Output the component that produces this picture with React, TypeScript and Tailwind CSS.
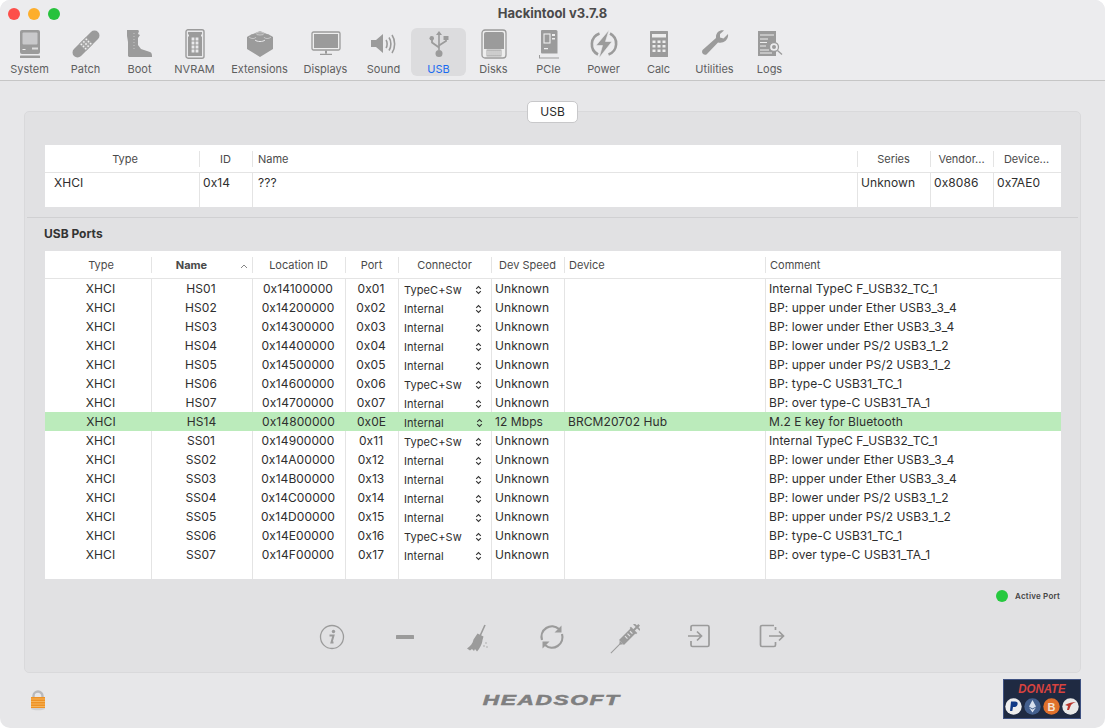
import React from "react";

const G = "#9b9b9b";

const ico: Record<string, React.ReactNode> = {
  System: (
    <svg width="22" height="30" viewBox="0 0 22 30">
      <rect x="1" y="1" width="20" height="24" rx="2" fill={G} />
      <rect x="3.5" y="3.5" width="15" height="12" rx="1" fill="#c9c9cb" />
      <rect x="3.5" y="20" width="3" height="1" fill="#eee" />
      <rect x="13" y="18.5" width="6" height="2" fill="#ddd" />
      <rect x="1" y="26.5" width="20" height="2.5" rx="0.5" fill={G} />
    </svg>
  ),
  Patch: (
    <svg width="30" height="30" viewBox="0 0 30 30">
      <g transform="rotate(-45 15 15)">
        <rect x="-2" y="10" width="34" height="10" rx="5" fill={G} />
        <rect x="10" y="10" width="10" height="10" fill="#a8a8a8" />
        {[11.5, 15, 18.5].map((x) => [12, 15, 18].map((y) => <circle key={`${x}${y}`} cx={x} cy={y} r="0.9" fill="#f0f0f0" />))}
      </g>
    </svg>
  ),
  Boot: (
    <svg width="28" height="30" viewBox="0 0 28 30">
      <path d="M1 1h11l1 1-1 3 2 1-2 3v7l3 4 9 3c2 .7 2 3 2 5H3l-1-1V13L1 7z" fill={G} />
      <path d="M8 4v16" stroke="#c8c8c8" strokeWidth="1" strokeDasharray="1 2" />
    </svg>
  ),
  NVRAM: (
    <svg width="20" height="30" viewBox="0 0 20 30">
      <rect x="1" y="0.8" width="18" height="28.4" rx="2" fill="#e9e9eb" stroke={G} strokeWidth="1.4" />
      <path d="M3 3h14v2l-1 1v1l1 1v19H3V8l1-1V6L3 5z" fill={G} />
      {[8.5, 12.5, 16.5, 20.5].map((y) => (
        <g key={y} fill="#e9e9eb">
          <rect x="6.6" y={y} width="2.8" height="3" />
          <rect x="10.6" y={y} width="2.8" height="3" />
        </g>
      ))}
    </svg>
  ),
  Extensions: (
    <svg width="28" height="28" viewBox="0 0 28 28">
      <path d="M1 7c2-1 4-3 6-3l7-3 7 3c2 0 4 2 6 3v12L14 27 1 19z" fill={G} />
      <ellipse cx="14" cy="3.5" rx="4" ry="1.6" fill="#a8a8a8" stroke="#dcdcde" strokeWidth="0.6" />
      <path d="M3 7c2 2 6 2 7 0M18 7c1 2 5 2 7 0" stroke="#dcdcde" strokeWidth="0.7" fill="none" />
      <path d="M9 10c2 2 8 2 10 0" stroke="#ececee" strokeWidth="1" fill="none" />
    </svg>
  ),
  Displays: (
    <svg width="30" height="26" viewBox="0 0 30 26">
      <rect x="1" y="1" width="28" height="18" rx="1.5" fill="#eee" stroke={G} strokeWidth="1.3" />
      <rect x="3" y="3" width="24" height="14" fill={G} />
      <path d="M14 19.5h2v3h-2zM9 22.800h12v1.300H9z" fill={G} />
    </svg>
  ),
  Sound: (
    <svg width="28" height="26" viewBox="0 0 28 26">
      <path d="M1 9h5l7-6v19l-7-6H1z" fill={G} />
      <path d="M16 9c1.5 2 1.5 6 0 8M19 6.500c2.500 3.500 2.500 9.500 0 13M22 4c3.500 5 3.500 13 0 18" stroke={G} strokeWidth="1.6" fill="none" />
    </svg>
  ),
  USB: (
    <svg width="20" height="28" viewBox="0 0 20 28">
      <path d="M10 1l3 4h-2.200v15H9.200V5H7z" fill={G} />
      <circle cx="10" cy="23.5" r="3.5" fill={G} />
      <path d="M3 8v4.500l7 5M17 8v3l-7 4.500" stroke={G} strokeWidth="1.8" fill="none" />
      <rect x="0.5" y="6" width="4.5" height="4.5" rx="2.2" fill={G} />
      <rect x="14.500" y="6" width="5" height="4" fill={G} />
    </svg>
  ),
  Disks: (
    <svg width="26" height="30" viewBox="0 0 26 30">
      <rect x="1" y="1" width="24" height="28" rx="3" fill="#eee" stroke={G} strokeWidth="1.3" />
      <path d="M3 5a2 2 0 0 1 2-2h16a2 2 0 0 1 2 2v15H3z" fill={G} />
      <rect x="6" y="21" width="14" height="6" fill="none" stroke={G} strokeWidth="0.8" />
      <path d="M8 21v6M10 21v6M12 21v6M14 21v6M16 21v6M18 21v6" stroke={G} strokeWidth="0.8" />
    </svg>
  ),
  PCIe: (
    <svg width="22" height="30" viewBox="0 0 22 30">
      <path d="M4 1h14a1.500 1.500 0 0 1 1.500 1.500v22H4a1 1 0 0 1-1-1V2a1 1 0 0 1 1-1z" fill={G} />
      <rect x="6" y="5" width="6" height="9" fill="none" stroke="#eee" strokeWidth="1.1" />
      <path d="M14 5h3v2h-3zM14 9h3v1.500h-3zM6 19h4v1.200H6z" fill="#eee" />
      <path d="M1 29h20M1.500 26v3" stroke={G} strokeWidth="1" />
    </svg>
  ),
  Power: (
    <svg width="28" height="28" viewBox="0 0 28 28">
      <path d="M9.500 3.500A11.500 11.500 0 0 0 8 24.500M18.500 24.500A11.500 11.500 0 0 0 20 3.500" stroke={G} strokeWidth="2.6" fill="none" />
      <path d="M19 0L6 15.500h6.500L9 28l13-16.500h-6.500z" fill={G} stroke="#ececee" strokeWidth="0.6" />
    </svg>
  ),
  Calc: (
    <svg width="20" height="28" viewBox="0 0 20 28">
      <rect x="1" y="1" width="18" height="26" rx="0.5" fill={G} />
      <rect x="3" y="4" width="14" height="3.500" fill="#eee" />
      {[10.5, 15, 19.5].map((y) => [3.5, 8.5, 13.5].map((x) => <rect key={`${x}${y}`} x={x} y={y} width="3" height="2.5" fill="#eee" />))}
    </svg>
  ),
  Utilities: (
    <svg width="28" height="28" viewBox="0 0 28 28">
      <path d="M27 4l-4.500 4.500-3.500-1V4l4-3.500c-4-1-8.500 2-8 7.500L1.500 20c-1.500 3 1 5.500 4 4.500L17 12.500c5 1.500 11-2.500 10-8.500z" fill={G} />
    </svg>
  ),
  Logs: (
    <svg width="26" height="28" viewBox="0 0 26 28">
      <rect x="1" y="1" width="18" height="25" fill={G} />
      <path d="M3 5h14M3 9h8M3 12.500h7M3 16h6M3 20h9M3 23h12" stroke="#eee" strokeWidth="1.1" />
      <circle cx="17" cy="17" r="4.500" fill="#ececee" stroke={G} strokeWidth="1.3" />
      <circle cx="17" cy="17" r="2" fill={G} />
      <path d="M20.500 20.500l4.500 4" stroke={G} strokeWidth="1.3" />
    </svg>
  ),
};

const tools = [
  { n: "System", w: "w-[55px]" },
  { n: "Patch", w: "w-[57px]" },
  { n: "Boot", w: "w-[51px]" },
  { n: "NVRAM", w: "w-[59px]" },
  { n: "Extensions", w: "w-[71px]" },
  { n: "Displays", w: "w-[61px]" },
  { n: "Sound", w: "w-[55px]" },
  { n: "USB", w: "w-[55px]" },
  { n: "Disks", w: "w-[55px]" },
  { n: "PCIe", w: "w-[55px]" },
  { n: "Power", w: "w-[55px]" },
  { n: "Calc", w: "w-[55px]" },
  { n: "Utilities", w: "w-[57px]" },
  { n: "Logs", w: "w-[53px]" },
];

const rows = [
  ["HS01", "0x14100000", "0x01", "TypeC+Sw", "Unknown", "", "Internal TypeC F_USB32_TC_1"],
  ["HS02", "0x14200000", "0x02", "Internal", "Unknown", "", "BP: upper under Ether USB3_3_4"],
  ["HS03", "0x14300000", "0x03", "Internal", "Unknown", "", "BP: lower under Ether USB3_3_4"],
  ["HS04", "0x14400000", "0x04", "Internal", "Unknown", "", "BP: lower under PS/2 USB3_1_2"],
  ["HS05", "0x14500000", "0x05", "Internal", "Unknown", "", "BP: upper under PS/2 USB3_1_2"],
  ["HS06", "0x14600000", "0x06", "TypeC+Sw", "Unknown", "", "BP: type-C USB31_TC_1"],
  ["HS07", "0x14700000", "0x07", "Internal", "Unknown", "", "BP: over type-C USB31_TA_1"],
  ["HS14", "0x14800000", "0x0E", "Internal", "12 Mbps", "BRCM20702 Hub", "M.2 E key for Bluetooth"],
  ["SS01", "0x14900000", "0x11", "TypeC+Sw", "Unknown", "", "Internal TypeC F_USB32_TC_1"],
  ["SS02", "0x14A00000", "0x12", "Internal", "Unknown", "", "BP: lower under Ether USB3_3_4"],
  ["SS03", "0x14B00000", "0x13", "Internal", "Unknown", "", "BP: upper under Ether USB3_3_4"],
  ["SS04", "0x14C00000", "0x14", "Internal", "Unknown", "", "BP: lower under PS/2 USB3_1_2"],
  ["SS05", "0x14D00000", "0x15", "Internal", "Unknown", "", "BP: upper under PS/2 USB3_1_2"],
  ["SS06", "0x14E00000", "0x16", "TypeC+Sw", "Unknown", "", "BP: type-C USB31_TC_1"],
  ["SS07", "0x14F00000", "0x17", "Internal", "Unknown", "", "BP: over type-C USB31_TA_1"],
];

const grid1 = "grid grid-cols-[155px_53px_605px_73px_63px_67px]";
const grid2 = "grid grid-cols-[107px_101px_93px_53px_93px_73px_201px_295px]";
const line = "border-r border-[#e4e4e4]";

function Head({ c, cls = "text-center pr-[2px]", last, bold }: { c: string; cls?: string; last?: boolean; bold?: boolean }) {
  return (
    <div className="relative h-[27px] flex items-center">
      <div className={`w-full pt-[2px] text-[11px] text-[#4a4a4a] ${cls} ${bold ? "font-bold" : ""}`}>{c}</div>
      {!last && <div className="absolute right-0 top-[6px] h-[16px] w-px bg-[#e4e4e4]" />}
    </div>
  );
}

function UpDown() {
  return (
    <svg width="7" height="10" viewBox="0 0 7 10" className="shrink-0">
      <path d="M1.2 3.8 3.5 1.500 5.800 3.800M1.200 6.200 3.500 8.500 5.800 6.200" stroke="#333" strokeWidth="1.1" fill="none" />
    </svg>
  );
}

function BottomIcon({ children }: { children: React.ReactNode }) {
  return <div className="w-[73.4px] flex justify-center">{children}</div>;
}

export default function App() {
  return (
    <div className="w-[1105px] h-[728px] bg-white overflow-hidden font-['Inter','Liberation_Sans',sans-serif]">
      <div className="w-full h-full rounded-[10px] overflow-hidden bg-[#e7e7e9] flex flex-col">
        {/* toolbar */}
        <div className="relative h-[81px] shrink-0 bg-[#ececee] border-b border-[#c6c6c6]">
          <div className="absolute left-[8px] top-[8px] flex gap-[8px]">
            <div className="w-[12px] h-[12px] rounded-full bg-[#fd4f4a]" />
            <div className="w-[12px] h-[12px] rounded-full bg-[#fdae2c]" />
            <div className="w-[12px] h-[12px] rounded-full bg-[#27c23c]" />
          </div>
          <div className="h-[28px] flex items-center justify-center text-[13px] font-bold text-[#4a4a4a]">Hackintool v3.7.8</div>
          <div className="flex pl-[2px]">
            {tools.map((t) => (
              <div key={t.n} className={`${t.w} h-[48px] flex flex-col items-center rounded-[6px] ${t.n === "USB" ? "bg-[#dcdcde]" : ""}`}>
                <div className="h-[33px] w-full flex items-center justify-center">{ico[t.n]}</div>
                <div className={`mt-[3px] text-[11px] leading-[14px] whitespace-nowrap ${t.n === "USB" ? "text-[#1a6cf0]" : "text-[#5e5e5e]"}`}>{t.n}</div>
              </div>
            ))}
          </div>
        </div>

        {/* body */}
        <div className="relative flex-1 px-[24px] pt-[30px]">
          <div className="relative h-[562px] rounded-[5px] border border-[#d9d9db] bg-[#e1e1e3] pt-[33px]">
            <div className="absolute left-[502px] top-[-11px] w-[51px] h-[22px] flex items-center justify-center rounded-[5px] bg-white border border-[#c8c8ca] text-[12px] text-[#2a2a2a]">USB</div>

            <div className="ml-[20px] w-[1016px] h-[62px] bg-white">
              <div className={`${grid1} border-b border-[#e4e4e4] h-[28px]`}>
                <Head c="Type" cls="text-center pl-[5px]" />
                <Head c="ID" />
                <Head c="Name" cls="text-left pl-[5px]" />
                <Head c="Series" />
                <Head c="Vendor..." />
                <Head c="Device..." last />
              </div>
              <div className={`${grid1} h-[34px] text-[12px] tracking-[0.08px] text-[#2e2e2e]`}>
                <div className={`${line} pl-[9px] pt-[1px]`}>XHCI</div>
                <div className={`${line} pl-[3px] pt-[1px]`}>0x14</div>
                <div className={`${line} pl-[5px] pt-[1px]`}>???</div>
                <div className={`${line} pl-[3px] pt-[1px]`}>Unknown</div>
                <div className={`${line} pl-[3px] pt-[1px]`}>0x8086</div>
                <div className="pl-[3px] pt-[1px]">0x7AE0</div>
              </div>
            </div>

            <div className="mt-[10px] ml-[2px] w-[1051px] h-px bg-[#d0d0d2]" />
            <div className="mt-[8px] ml-[19px] h-[16px] text-[12px] leading-[16px] font-bold text-[#333]">USB Ports</div>

            <div className="mt-[9px] ml-[20px] w-[1016px] h-[328px] bg-white flex flex-col">
              <div className={`${grid2} border-b border-[#e4e4e4] h-[28px] shrink-0`}>
                <Head c="Type" cls="text-center pl-[5px]" />
                <div className="relative">
                  <Head c="Name" bold cls="text-center pr-[22px]" />
                  <svg width="8" height="5" viewBox="0 0 8 5" className="absolute right-[5px] top-[13px]">
                    <path d="M1 4 4 1l3 3" stroke="#777" strokeWidth="0.9" fill="none" />
                  </svg>
                </div>
                <Head c="Location ID" />
                <Head c="Port" />
                <Head c="Connector" />
                <Head c="Dev Speed" />
                <Head c="Device" cls="text-left pl-[4px]" />
                <Head c="Comment" cls="text-left pl-[4px]" last />
              </div>
              {rows.map((r) => {
                const on = r[0] === "HS14";
                const l = on ? "" : line;
                return (
                  <div key={r[0]} className={`${grid2} h-[19px] text-[12px] leading-[19px] tracking-[0.08px] text-[#2e2e2e] ${on ? "bg-[#bbebbb]" : ""}`}>
                    <div className={`${l} text-center pl-[5px]`}>XHCI</div>
                    <div className={`${l} text-center pr-[2px]`}>{r[0]}</div>
                    <div className={`${l} text-center pr-[2px]`}>{r[1]}</div>
                    <div className={`${l} text-center pr-[2px]`}>{r[2]}</div>
                    <div className={`${l} pl-[5px] pr-[9px] flex items-center justify-between text-[11px]`}>
                      <span className="pt-[2px]">{r[3]}</span>
                      <UpDown />
                    </div>
                    <div className={`${l} pl-[3px]`}>{r[4]}</div>
                    <div className={`${l} pl-[3px]`}>{r[5]}</div>
                    <div className="pl-[3px]">{r[6]}</div>
                  </div>
                );
              })}
              <div className={`${grid2} flex-1`}>
                {[0, 1, 2, 3, 4, 5, 6].map((i) => (
                  <div key={i} className={line} />
                ))}
              </div>
            </div>

            <div className="mt-[10px] mr-[20px] flex items-center justify-end gap-[7px] h-[14px]">
              <div className="w-[12px] h-[12px] rounded-full bg-[#26c93f]" />
              <div className="text-[8px] font-semibold text-[#444] tracking-[0.2px]">Active Port</div>
            </div>

            <div className="mt-[21px] ml-[270px] flex">
              <BottomIcon>
                <svg width="26" height="26" viewBox="0 0 26 26">
                  <circle cx="13" cy="13" r="11.5" fill="none" stroke={G} strokeWidth="1.3" />
                  <circle cx="14.5" cy="7.5" r="1.7" fill={G} />
                  <path d="M10.500 11.500h4l-2 7h2" stroke={G} strokeWidth="2" fill="none" />
                </svg>
              </BottomIcon>
              <BottomIcon>
                <svg width="20" height="26" viewBox="0 0 20 26">
                  <rect x="1" y="11" width="18" height="4" rx="0.5" fill={G} />
                </svg>
              </BottomIcon>
              <BottomIcon>
                <svg width="24" height="28" viewBox="0 0 24 28">
                  <path d="M19 1l-5 11" stroke={G} strokeWidth="1.6" />
                  <path d="M11.500 9.500l6 3-1 3.500c-.3 4-3 9-5.500 11.500L9 25l-1 2-2-2-2 1.500-3-2c3-2 6-5 6.500-9z" fill={G} />
                  <circle cx="20" cy="19" r="0.7" fill={G} />
                  <circle cx="18" cy="22" r="0.7" fill={G} />
                  <circle cx="21" cy="23" r="0.7" fill={G} />
                </svg>
              </BottomIcon>
              <BottomIcon>
                <svg width="26" height="26" viewBox="0 0 26 26">
                  <path d="M3 16A10.500 10.500 0 0 1 20 5" stroke={G} strokeWidth="2.2" fill="none" />
                  <path d="M23 10A10.500 10.500 0 0 1 6 21" stroke={G} strokeWidth="2.2" fill="none" />
                  <path d="M22.500 1.500v7h-7zM3.500 24.500v-7h7z" fill={G} />
                </svg>
              </BottomIcon>
              <BottomIcon>
                <svg width="30" height="30" viewBox="0 0 30 30">
                  <g transform="rotate(45 15 15)">
                    <path d="M15 -5v3" stroke={G} strokeWidth="2.4" />
                    <path d="M10.500 -2h9" stroke={G} strokeWidth="1.8" />
                    <path d="M15 -2v5" stroke={G} strokeWidth="2" />
                    <path d="M10.500 3h9" stroke={G} strokeWidth="1.8" />
                    <rect x="11.5" y="3" width="7" height="17" fill={G} />
                    <path d="M13 6h3.500M13 9.500h3.500M13 13h3.500" stroke="#e1e1e3" strokeWidth="1.2" />
                    <path d="M12.500 20h5l-2.500 3z" fill={G} />
                    <path d="M15 22v13" stroke={G} strokeWidth="1" />
                  </g>
                </svg>
              </BottomIcon>
              <BottomIcon>
                <svg width="24" height="24" viewBox="0 0 24 24">
                  <path d="M4 7V3a1.500 1.500 0 0 1 1.500-1.500h15A1.500 1.500 0 0 1 22 3v18a1.500 1.500 0 0 1-1.500 1.500h-15A1.500 1.500 0 0 1 4 21v-4" stroke={G} strokeWidth="1.7" fill="none" />
                  <path d="M1 12h13M10 7.500l4.500 4.500-4.500 4.500" stroke={G} strokeWidth="1.7" fill="none" />
                </svg>
              </BottomIcon>
              <BottomIcon>
                <svg width="26" height="24" viewBox="0 0 26 24">
                  <path d="M15 1.500H3A1.500 1.500 0 0 0 1.500 3v18A1.500 1.500 0 0 0 3 22.500h12A1.500 1.500 0 0 0 16.500 21v-3M16.500 6V3" stroke={G} strokeWidth="1.7" fill="none" />
                  <path d="M10 12h14.500M20 7.500l4.500 4.500-4.500 4.500" stroke={G} strokeWidth="1.7" fill="none" />
                </svg>
              </BottomIcon>
            </div>
          </div>

          {/* footer */}
          <div className="relative mt-[6px] h-[40px] flex items-center justify-between">
            <div className="pl-[6px] pt-[3px]">
              <svg width="16" height="21" viewBox="0 0 16 21">
                <ellipse cx="8" cy="18.500" rx="7" ry="1.800" fill="#d0d0d2" />
                <path d="M3.500 8V6a4.500 4.500 0 0 1 9 0v2" fill="none" stroke="#b9b9bb" strokeWidth="2.4" />
                <rect x="1" y="7" width="14" height="11" fill="#ee9226" />
                <path d="M1 9h14M1 11.500h14M1 14h14M1 16.500h14" stroke="#f7bd68" strokeWidth="0.8" />
              </svg>
            </div>
            <div className="absolute left-[457px] top-[11px] w-[141px] text-center italic font-bold text-[14px] leading-[20px] tracking-[1px] text-[#7f7f80] [-webkit-text-stroke:0.5px_#7f7f80] font-['Liberation_Sans',sans-serif] scale-x-[1.62]">HEADSOFT</div>
            <div className="w-[78px] h-[40px] bg-[#1f2a42] border border-[#3f5282] flex flex-col items-center">
              <div className="italic font-bold text-[13px] leading-[16px] mt-[1px] text-[#d8433f] font-['Liberation_Sans',sans-serif] scale-x-[0.88]">DONATE</div>
              <div className="flex gap-[2px] mt-[1px]">
                <svg width="17" height="17" viewBox="0 0 17 17"><circle cx="8.5" cy="8.5" r="8.200" fill="#eee" /><path d="M6 3.500h4c2 0 3 1 2.500 3-.4 2-2 2.500-3.500 2.500H8l-.7 4H5z" fill="#123a86" /></svg>
                <svg width="17" height="17" viewBox="0 0 17 17"><circle cx="8.5" cy="8.500" r="8.200" fill="#44608f" /><path d="M8.500 2 12 8.500 8.500 10.500 5 8.500zM5 9.500l3.500 2 3.500-2-3.500 5z" fill="#d8e0ee" /></svg>
                <svg width="17" height="17" viewBox="0 0 17 17"><circle cx="8.5" cy="8.500" r="8.200" fill="#e0702c" /><text x="8.5" y="12.500" textAnchor="middle" fontSize="11" fontWeight="700" fill="#f3e3d3" fontFamily="Liberation Sans">B</text></svg>
                <svg width="17" height="17" viewBox="0 0 17 17"><circle cx="8.5" cy="8.500" r="8.200" fill="#e8e8e8" /><path d="M3 7c3-2 8-3 11-3-3 1-4 2-5 3l-2 5H5l1-4z" fill="#b9342c" /></svg>
              </div>
            </div>
          </div>
        </div>
      </div>
    </div>
  );
}
